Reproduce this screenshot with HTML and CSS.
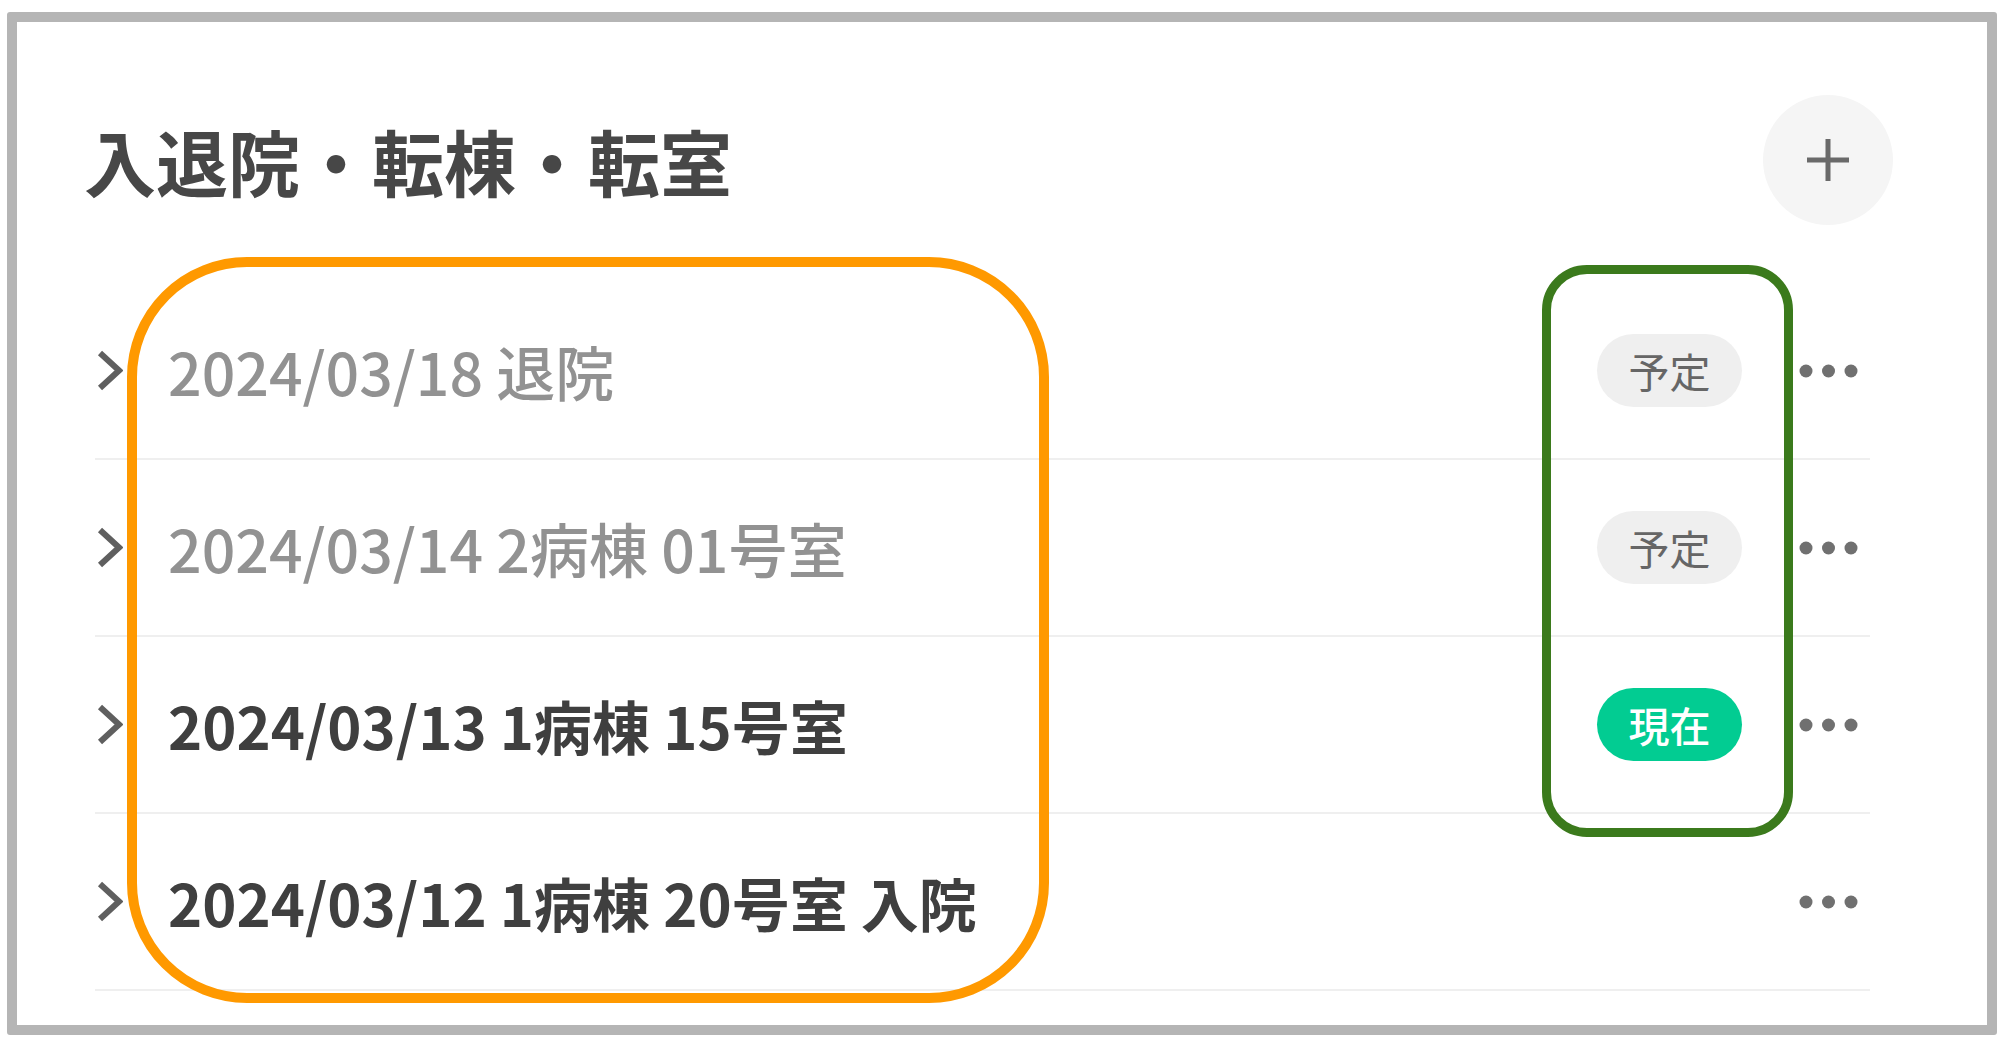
FILE: index.html
```html
<!DOCTYPE html>
<html lang="ja">
<head>
<meta charset="utf-8">
<title>入退院・転棟・転室</title>
<link rel="stylesheet" href="styles.css">
</head>
<body>
<div class="frame">
  <div class="header">
    <h1 class="title">入退院・転棟・転室</h1>
    <button class="add-btn" aria-label="追加">
      <svg width="44" height="44" viewBox="0 0 44 44"><path d="M22 1v42M1 22h42" stroke="#6a6a6a" stroke-width="5" fill="none"/></svg>
    </button>
  </div>
  <ul class="list">
    <li class="row is-future">
      <svg class="chev" width="26" height="41" viewBox="0 0 26 41"><path d="M3 3 L22 20.5 L3 38" stroke="#5f5f5f" stroke-width="6" fill="none"/></svg>
      <span class="label">2024/03/18 退院</span>
      <span class="badge-slot"><span class="badge badge-plan">予定</span></span>
      <svg class="dots" width="59" height="14" viewBox="0 0 59 14"><circle cx="7" cy="7" r="6.5"/><circle cx="29.5" cy="7" r="6.5"/><circle cx="52" cy="7" r="6.5"/></svg>
    </li>
    <li class="row is-future">
      <svg class="chev" width="26" height="41" viewBox="0 0 26 41"><path d="M3 3 L22 20.5 L3 38" stroke="#5f5f5f" stroke-width="6" fill="none"/></svg>
      <span class="label">2024/03/14 2病棟 01号室</span>
      <span class="badge-slot"><span class="badge badge-plan">予定</span></span>
      <svg class="dots" width="59" height="14" viewBox="0 0 59 14"><circle cx="7" cy="7" r="6.5"/><circle cx="29.5" cy="7" r="6.5"/><circle cx="52" cy="7" r="6.5"/></svg>
    </li>
    <li class="row is-current">
      <svg class="chev" width="26" height="41" viewBox="0 0 26 41"><path d="M3 3 L22 20.5 L3 38" stroke="#5f5f5f" stroke-width="6" fill="none"/></svg>
      <span class="label">2024/03/13 1病棟 15号室</span>
      <span class="badge-slot"><span class="badge badge-now">現在</span></span>
      <svg class="dots" width="59" height="14" viewBox="0 0 59 14"><circle cx="7" cy="7" r="6.5"/><circle cx="29.5" cy="7" r="6.5"/><circle cx="52" cy="7" r="6.5"/></svg>
    </li>
    <li class="row is-past">
      <svg class="chev" width="26" height="41" viewBox="0 0 26 41"><path d="M3 3 L22 20.5 L3 38" stroke="#5f5f5f" stroke-width="6" fill="none"/></svg>
      <span class="label">2024/03/12 1病棟 20号室 入院</span>
      <span class="badge-slot"></span>
      <svg class="dots" width="59" height="14" viewBox="0 0 59 14"><circle cx="7" cy="7" r="6.5"/><circle cx="29.5" cy="7" r="6.5"/><circle cx="52" cy="7" r="6.5"/></svg>
    </li>
  </ul>
  <div class="mark mark-orange"></div>
  <div class="mark mark-green"></div>
</div>
</body>
</html>
```

FILE: styles.css
```css
html, body {
  margin: 0;
  padding: 0;
  background: #ffffff;
}

body {
  font-family: "Noto Sans CJK JP", "Noto Sans", sans-serif;
  color: #444444;
}

.frame {
  position: relative;
  box-sizing: border-box;
  width: 1990px;
  height: 1023px;
  margin: 12px 0 0 7px;
  border: 10px solid #b5b5b5;
  border-radius: 3px;
  padding: 75px 94px 0 65px;
  background: #ffffff;
}

.header {
  display: flex;
  align-items: center;
  justify-content: space-between;
  height: 126px;
}

.title {
  margin: 0 0 0 2px;
  font-size: 72px;
  line-height: 1;
  font-weight: 700;
  color: #474747;
  letter-spacing: 0;
}

.add-btn {
  display: flex;
  align-items: center;
  justify-content: center;
  width: 130px;
  height: 130px;
  padding: 0;
  border: none;
  border-radius: 50%;
  background: #f5f5f5;
}

.list {
  list-style: none;
  margin: 60px 23px 0 13px;
  padding: 0;
}

.row {
  display: flex;
  align-items: center;
  box-sizing: border-box;
  height: 177px;
  padding: 0 12px 0 2px;
  border-bottom: 2px solid #efefef;
}

.chev {
  flex: none;
  display: block;
}

.label {
  flex: 1;
  margin-left: 45px;
  font-size: 58px;
  line-height: 1;
  white-space: nowrap;
}

.is-future .label {
  color: #929292;
  font-size: 59px;
  font-weight: 500;
}

.is-current .label,
.is-past .label {
  color: #3f3f3f;
  font-weight: 700;
}

.badge-slot {
  flex: none;
  display: flex;
  justify-content: center;
  width: 145px;
}

.badge {
  display: flex;
  align-items: center;
  justify-content: center;
  width: 145px;
  height: 73px;
  border-radius: 37px;
  font-size: 41px;
  line-height: 1;
}

.badge-plan {
  background: #efefef;
  color: #666666;
  font-weight: 400;
}

.badge-now {
  background: #02cc92;
  color: #ffffff;
  font-weight: 500;
}

.dots {
  flex: none;
  display: block;
  margin-left: 57px;
  fill: #707070;
}

.mark {
  position: absolute;
  box-sizing: border-box;
  pointer-events: none;
}

.mark-orange {
  left: 110px;
  top: 235px;
  width: 922px;
  height: 746px;
  border: 10px solid #ff9900;
  border-radius: 120px;
}

.mark-green {
  left: 1525px;
  top: 243px;
  width: 251px;
  height: 572px;
  border: 9px solid #3b7a1c;
  border-radius: 45px;
}
```
